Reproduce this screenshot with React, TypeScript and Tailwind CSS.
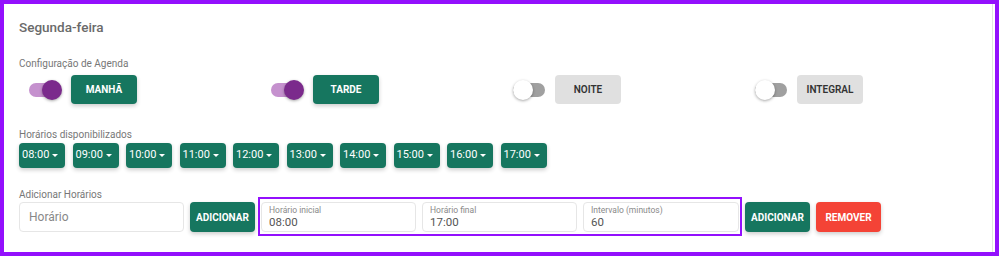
const periods = [
  { label: "MANHÃ", on: true },
  { label: "TARDE", on: true },
  { label: "NOITE", on: false },
  { label: "INTEGRAL", on: false },
]

const hours = ["08:00", "09:00", "10:00", "11:00", "12:00", "13:00", "14:00", "15:00", "16:00", "17:00"]

const Toggle = ({ on }: { on: boolean }) => (
  <div className="relative h-[20px] w-[34px]">
    <div
      className={`absolute left-0 top-[3px] h-[14px] w-[32px] rounded-full ${
        on ? "bg-[#c591ce]" : "bg-[#a0a0a0]"
      }`}
    />
    <div
      className={`absolute top-0 h-[20px] w-[20px] rounded-full shadow-[0_1px_3px_rgba(0,0,0,0.35)] ${
        on ? "left-[13px] bg-[#7b2a8c]" : "left-0 bg-white"
      }`}
    />
  </div>
)

const Field = ({ label, value }: { label: string; value: string }) => (
  <div className="flex h-[30px] w-full flex-col justify-center rounded-[4px] border border-[#e6e6e6] bg-white px-[7px] leading-none">
    <span className="text-[8.5px] text-[#8a8a8a]">{label}</span>
    <span className="mt-[2px] text-[11.5px] text-[#555]">{value}</span>
  </div>
)

const greenBtn =
  "h-[30px] w-[65px] rounded-[4px] bg-[#16765f] text-[10px] font-bold text-white shadow-[0_2px_4px_rgba(0,0,0,0.2)]"

const App = () => {
  return (
    <div className="h-[257px] w-[1000px] bg-white" style={{ fontFamily: "Roboto, sans-serif" }}>
      <div className="h-[256px] w-[999px] border-4 border-[#9310fd]">
        <div className="h-full w-[989px] border-r border-[#e4e4e4] px-[15px] pt-[13px]">
          <h2 className="text-[13.5px] font-medium leading-[20px] text-[#6a6a6a]">Segunda-feira</h2>

          <p className="mt-[21px] text-[10px] leading-[12px] text-[#777]">Configuração de Agenda</p>
          <div className="mt-[5px] grid grid-cols-[242px_242px_242px_242px]">
            {periods.map((p) => (
              <div key={p.label} className="flex items-center pl-[10px]">
                <Toggle on={p.on} />
                <button
                  className={`ml-[8px] h-[29px] w-[66px] rounded-[4px] text-[10px] ${
                    p.on
                      ? "bg-[#16765f] font-bold text-white shadow-[0_2px_4px_rgba(0,0,0,0.2)]"
                      : "bg-[#e0e0e0] font-semibold text-[#333]"
                  }`}
                >
                  {p.label}
                </button>
              </div>
            ))}
          </div>

          <p className="mt-[25px] text-[10px] leading-[12px] text-[#777]">Horários disponibilizados</p>
          <div className="mt-[2px] flex gap-[7.5px]">
            {hours.map((h) => (
              <div
                key={h}
                className="flex h-[25px] w-[46px] items-center rounded-[4px] bg-[#16765f] pl-[3px] text-[11px] text-white shadow-[0_2px_4px_rgba(0,0,0,0.2)]"
              >
                {h}
                <span className="ml-[3px] h-0 w-0 border-x-[3px] border-t-[3px] border-x-transparent border-t-white" />
              </div>
            ))}
          </div>

          <p className="mt-[21px] text-[10px] leading-[12px] text-[#777]">Adicionar Horários</p>
          <div className="mt-[1px] flex items-center">
            <div className="flex h-[30px] w-[165px] items-center rounded-[4px] border border-[#e6e6e6] px-[9px] text-[12px] text-[#888]">
              Horário
            </div>
            <button className={`ml-[6px] ${greenBtn}`}>ADICIONAR</button>
            <div className="-mb-[4px] -mt-[5px] ml-[3px] flex h-[39px] gap-[6px] border-2 border-[#9310fd] pb-[2px] pl-[1px] pr-[1px] pt-[3px]">
              <div className="w-[155px]">
                <Field label="Horário inicial" value="08:00" />
              </div>
              <div className="w-[155px]">
                <Field label="Horário final" value="17:00" />
              </div>
              <div className="w-[156px]">
                <Field label="Intervalo (minutos)" value="60" />
              </div>
            </div>
            <button className={`ml-[3px] ${greenBtn}`}>ADICIONAR</button>
            <button className={`ml-[6px] ${greenBtn} bg-[#f44336]`}>REMOVER</button>
          </div>
        </div>
      </div>
    </div>
  )
}

export default App
